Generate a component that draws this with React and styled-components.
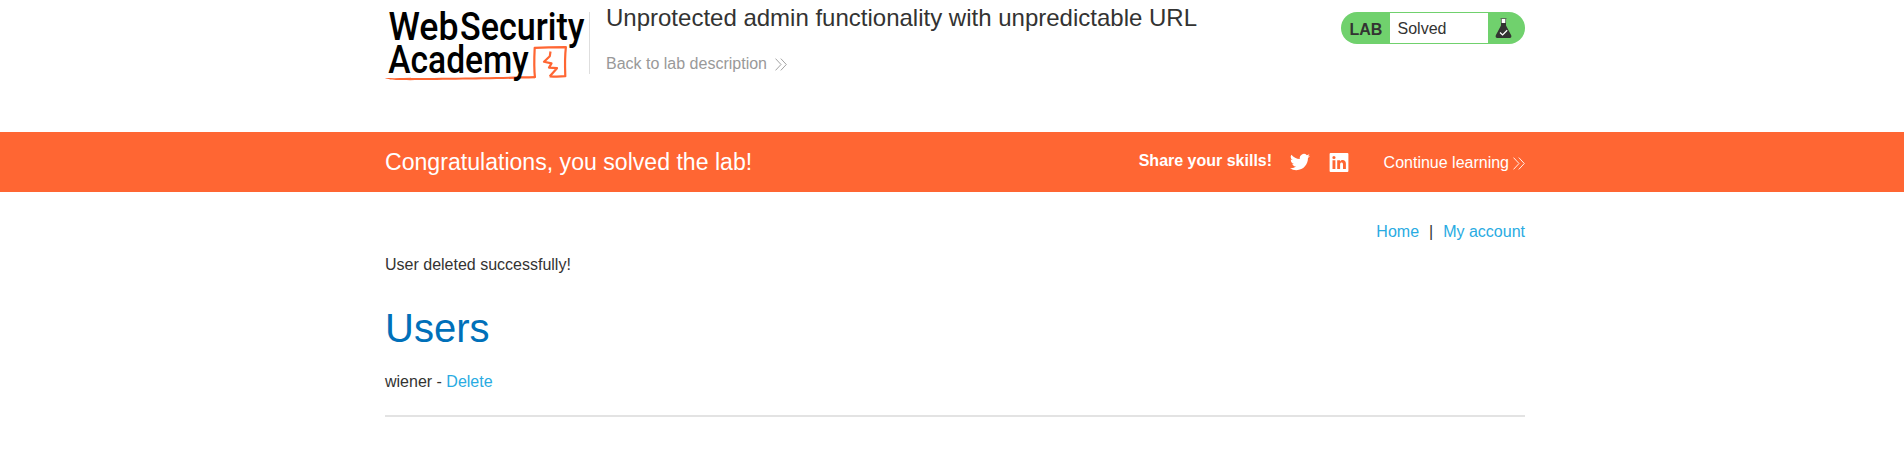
import React from "react";
import styled, { createGlobalStyle } from "styled-components";

const GlobalStyle = createGlobalStyle`
  * { box-sizing: border-box; }
  body {
    margin: 0;
    background: #fff;
    color: #333332;
    font: 16px/20px "Liberation Sans", Arial, sans-serif;
  }
`;

const Container = styled.div`
  width: 1146px;
  margin: 0 auto;
  padding-left: 6px;
`;

const Header = styled(Container).attrs({ as: "header" })`
  display: flex;
  align-items: flex-start;
  height: 132px;
`;

const Logo = styled.svg`
  flex: none;
  display: block;
  width: 204px;
  height: 90px;
  overflow: visible;
`;

const TitleBlock = styled.div`
  flex: 1;
  display: flex;
  margin-top: 12px;
  height: 62px;
  border-left: 1px solid #dedede;
  padding-left: 16px;
`;

const TitleColumn = styled.div`
  margin-top: -8px;
`;

const Title = styled.h2`
  margin: 0 0 22px;
  font-size: 24px;
  line-height: 28px;
  font-weight: 400;
`;

const BackLink = styled.a`
  display: flex;
  align-items: center;
  gap: 8px;
  color: #999;
`;

const Chevron = styled.svg`
  flex: none;
  width: 12px;
  height: 13px;
  fill: none;
  stroke: currentColor;
  stroke-width: 0.9;
`;

const LabStatus = styled.div`
  display: flex;
  width: 184px;
  height: 32px;
  margin-top: 12px;
  padding: 1px 0;
  border-radius: 16px;
  background: #70d16d;
`;

const LabLabel = styled.span`
  width: 49px;
  padding: 7px 0 0 8.5px;
  font-weight: 700;
`;

const LabState = styled.span`
  width: 98px;
  padding: 6px 0 0 7.5px;
  background: #fff;
`;

const Flask = styled.svg`
  width: 17px;
  height: 21px;
  margin: 5px 0 0 7px;
`;

const Banner = styled.section`
  height: 60px;
  background: #ff6633;
  color: #fff;
`;

const BannerRow = styled(Container)`
  display: flex;
  align-items: flex-start;
`;

const BannerTitle = styled.h4`
  flex: 1;
  margin: 16px 0 0;
  font-size: 23.1px;
  line-height: 28px;
  font-weight: 400;
`;

const Share = styled.span`
  margin-top: 19px;
  font-weight: 700;
`;

const ShareIcon = styled.svg`
  width: 20px;
  height: 20px;
  margin: 20px 0 0 ${(p) => p.$gap}px;
  fill: #fff;
`;

const ContinueLink = styled.a`
  display: flex;
  align-items: center;
  gap: 4px;
  margin: 21px 0 0 34.5px;
`;

const Nav = styled.nav`
  display: flex;
  justify-content: flex-end;
  gap: 10px;
  padding-top: 30px;
`;

const Link = styled.a`
  color: #29abe2;
`;

const Message = styled.p`
  margin: 13px 0 0;
`;

const Heading = styled.h1`
  margin: 29px 0 0;
  font-size: 40px;
  line-height: 48px;
  font-weight: 400;
  color: #0070b9;
`;

const UserRow = styled.div`
  margin-top: 20px;
`;

const Rule = styled.hr`
  height: 2px;
  margin: 23px 0 0;
  border: 0;
  background: #e3e3e3;
`;

const DoubleChevron = () => (
  <Chevron viewBox="0 0 12 13">
    <path d="M.5.6 6 6.5.5 12.4M5.8.6l5.5 5.9-5.5 5.9" />
  </Chevron>
);

const AcademyLogo = () => (
  <Logo viewBox="0 0 204 90">
    <g fill="none" stroke="#ff6633" strokeLinejoin="round">
      <path strokeWidth="2.200" d="M150 78c-1.200-10-.8-20-.3-30.200 10.500-.5 20.500-.6 31.200-.6-1.200 9.700-1 19-.6 29-5.500.6-10 .5-15.700.2" />
      <path strokeWidth="2.200" d="M165.500 51.500l-.7 4.700-5.800 5.500 7.500 1.700-2.500 4.200 8 .6-7.200 8" />
    </g>
    <path fill="#ff6633" d="M0 78.100c32 .2 112-.8 150-2v2.200c-45 1.100-115 2.200-137 1.800-5 0-11-.9-13-2Z" />
    <g fontFamily="Roboto, sans-serif" fontSize="38" fontWeight="500">
      <text x="3.500" y="40.300" textLength="70" lengthAdjust="spacingAndGlyphs">Web</text>
      <text x="75" y="40.300" textLength="124.500" lengthAdjust="spacingAndGlyphs">Security</text>
      <text x="3.300" y="73" textLength="140.500" lengthAdjust="spacingAndGlyphs">Academy</text>
    </g>
  </Logo>
);

export default function App() {
  return (
    <>
      <GlobalStyle />
      <Header>
        <AcademyLogo />
        <TitleBlock>
          <TitleColumn>
            <Title>Unprotected admin functionality with unpredictable URL</Title>
            <BackLink>
              Back to lab description
              <DoubleChevron />
            </BackLink>
          </TitleColumn>
        </TitleBlock>
        <LabStatus>
          <LabLabel>LAB</LabLabel>
          <LabState>Solved</LabState>
          <Flask viewBox="0 0 17 21">
            <path d="M6.300 1h4.400v5H6.300z" fill="#fff" />
            <path d="M5.500.5h6M6.400 1v4M10.600 1v4" stroke="#555" strokeWidth=".8" />
            <path d="M6 5h5v2.500l5.200 9.800c.5 1.500 0 2.700-1.500 2.700H2.300c-1.500 0-2-1.200-1.500-2.700L6 7.500Z" fill="#333332" />
            <path d="m5 14.500 2.600 2.400 4.600-4.600" fill="none" stroke="#fff" strokeWidth="1.300" />
          </Flask>
        </LabStatus>
      </Header>
      <Banner>
        <BannerRow>
          <BannerTitle>Congratulations, you solved the lab!</BannerTitle>
          <Share>Share your skills!</Share>
          <ShareIcon $gap={18} viewBox="0 0 24 24">
            <path d="M23.950 4.600a10 10 0 0 1-2.800.8 4.900 4.900 0 0 0 2.150-2.700 10 10 0 0 1-3.120 1.180 4.920 4.920 0 0 0-8.380 4.480A14 14 0 0 1 1.670 3.150a4.900 4.900 0 0 0 1.520 6.570 4.900 4.900 0 0 1-2.230-.61v.06a4.920 4.920 0 0 0 3.950 4.830 5 5 0 0 1-2.210.08 4.940 4.940 0 0 0 4.600 3.420A9.870 9.870 0 0 1 0 19.540a14 14 0 0 0 7.550 2.210c9.050 0 14-7.500 14-13.980 0-.21 0-.42-.02-.63a9.900 9.900 0 0 0 2.420-2.540Z" />
          </ShareIcon>
          <ShareIcon $gap={19} viewBox="0 0 20 20">
            <path fillRule="evenodd" d="M1.600 1h16.800q1 0 1 1v17q0 1-1 1H1.600q-1 0-1-1V2q0-1 1-1ZM3.500 8.200V17h2.900V8.200Zm1.450-4.300a1.600 1.600 0 1 0 0 3.200 1.600 1.600 0 0 0 0-3.200ZM8.200 8.200V17h2.900v-4.500c0-2.700 2.900-2.500 2.900-.1V17h2.900v-5.200c0-4.400-4.300-4.500-5.900-2.300V8.200Z" />
          </ShareIcon>
          <ContinueLink>
            Continue learning
            <DoubleChevron />
          </ContinueLink>
        </BannerRow>
      </Banner>
      <Container as="main">
        <Nav>
          <Link>Home</Link>
          <span>|</span>
          <Link>My account</Link>
        </Nav>
        <Message>User deleted successfully!</Message>
        <Heading>Users</Heading>
        <UserRow>
          wiener - <Link>Delete</Link>
        </UserRow>
        <Rule />
      </Container>
    </>
  );
}
